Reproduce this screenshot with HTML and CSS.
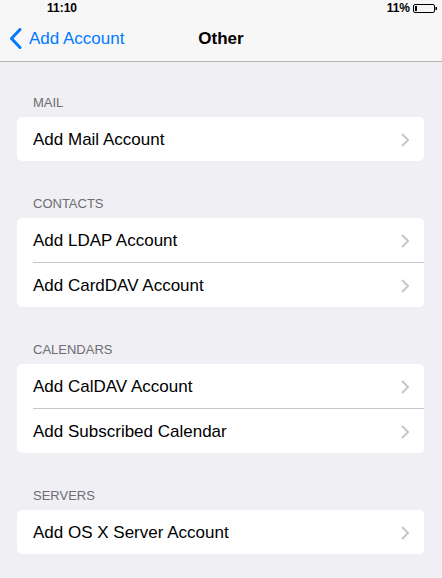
FILE: index.html
```html
<!DOCTYPE html>
<html>
<head>
<meta charset="utf-8">
<link rel="stylesheet" href="styles.css">
</head>
<body>
<div class="top">
  <div class="status">
    <span class="time">11:10</span>
    <span class="batt">
      <span class="pct">11%</span>
      <svg class="batt-icon" width="24" height="9" viewBox="0 0 24 9">
        <rect x="0.5" y="0.5" width="21" height="8" rx="1.5" fill="none" stroke="#000" stroke-width="1"/>
        <rect x="2" y="2" width="2" height="5" fill="#000"/>
        <rect x="22.5" y="3" width="1.5" height="3" fill="#000"/>
      </svg>
    </span>
  </div>
  <div class="nav">
    <div class="back">
      <svg width="13" height="21" viewBox="0 0 13 21"><path d="M11 1.5 L2.5 10.5 L11 19.5" fill="none" stroke="#007aff" stroke-width="3" stroke-linecap="round" stroke-linejoin="round"/></svg>
      <span>Add Account</span>
    </div>
    <div class="title">Other</div>
    <div></div>
  </div>
</div>
<div class="content">
  <div class="hdr first">MAIL</div>
  <div class="card">
    <div class="row"><span>Add Mail Account</span><svg class="chev" width="8" height="14" viewBox="0 0 8 14"><path d="M1 1 L7 7 L1 13" fill="none" stroke="#c7c7cc" stroke-width="2"/></svg></div>
  </div>
  <div class="hdr">CONTACTS</div>
  <div class="card">
    <div class="row"><span>Add LDAP Account</span><svg class="chev" width="8" height="14" viewBox="0 0 8 14"><path d="M1 1 L7 7 L1 13" fill="none" stroke="#c7c7cc" stroke-width="2"/></svg></div>
    <div class="sep"></div>
    <div class="row"><span>Add CardDAV Account</span><svg class="chev" width="8" height="14" viewBox="0 0 8 14"><path d="M1 1 L7 7 L1 13" fill="none" stroke="#c7c7cc" stroke-width="2"/></svg></div>
  </div>
  <div class="hdr">CALENDARS</div>
  <div class="card">
    <div class="row"><span>Add CalDAV Account</span><svg class="chev" width="8" height="14" viewBox="0 0 8 14"><path d="M1 1 L7 7 L1 13" fill="none" stroke="#c7c7cc" stroke-width="2"/></svg></div>
    <div class="sep"></div>
    <div class="row"><span>Add Subscribed Calendar</span><svg class="chev" width="8" height="14" viewBox="0 0 8 14"><path d="M1 1 L7 7 L1 13" fill="none" stroke="#c7c7cc" stroke-width="2"/></svg></div>
  </div>
  <div class="hdr">SERVERS</div>
  <div class="card">
    <div class="row"><span>Add OS X Server Account</span><svg class="chev" width="8" height="14" viewBox="0 0 8 14"><path d="M1 1 L7 7 L1 13" fill="none" stroke="#c7c7cc" stroke-width="2"/></svg></div>
  </div>
</div>
</body>
</html>
```
FILE: styles.css
```css
* { box-sizing: border-box; }
html, body {
  margin: 0;
  padding: 0;
  background: #efeff4;
  font-family: "Liberation Sans", Arial, sans-serif;
  width: 442px;
  height: 578px;
  overflow: hidden;
}
.top {
  background: #f7f7f7;
  border-bottom: 1px solid #b2b2b2;
}
.status {
  height: 18px;
  display: flex;
  justify-content: space-between;
  align-items: center;
  padding: 0 5px 2px 47px;
  font-size: 12px;
  font-weight: bold;
  color: #000;
}
.batt {
  display: flex;
  align-items: center;
  gap: 3px;
}
.batt-icon { display: block; }
.nav {
  height: 43px;
  display: grid;
  grid-template-columns: 1fr auto 1fr;
  align-items: center;
  padding-bottom: 2px;
}
.back {
  display: flex;
  align-items: center;
  gap: 7px;
  padding-left: 9px;
  color: #007aff;
  font-size: 17px;
}
.back svg { display: block; }
.title {
  font-size: 17px;
  font-weight: bold;
  color: #000;
}
.content {
  padding: 0 18px 0 17px;
}
.hdr {
  padding: 34px 0 5px 16px;
  line-height: 18px;
  font-size: 13px;
  color: #6d6d72;
}
.hdr.first { padding-top: 32px; }
.card {
  background: #fff;
  border-radius: 5px;
}
.row {
  height: 44px;
  display: flex;
  align-items: center;
  justify-content: space-between;
  padding: 1px 15px 0 16px;
  font-size: 17px;
  color: #000;
}
.chev { display: block; }
.sep {
  height: 1px;
  margin-left: 16px;
  background: #c8c7cc;
}
```
